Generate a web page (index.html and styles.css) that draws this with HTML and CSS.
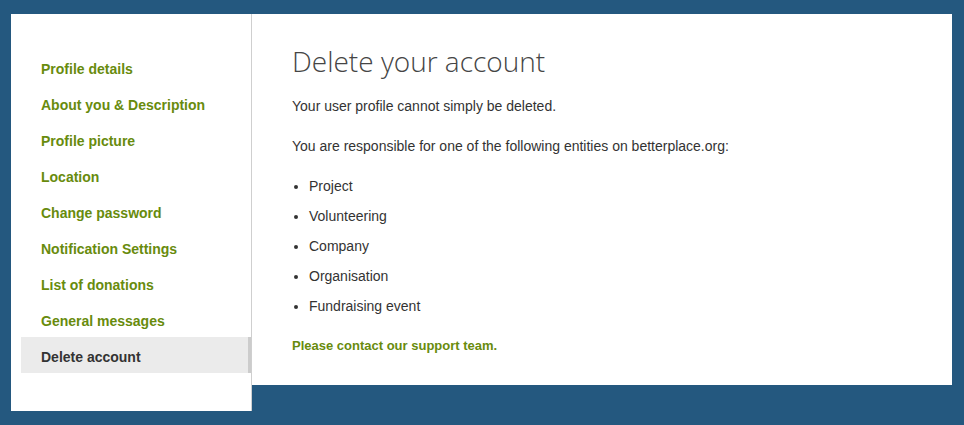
FILE: index.html
```html
<!DOCTYPE html>
<html lang="en">
<head>
    <meta charset="UTF-8">
    <meta name="viewport" content="width=device-width, initial-scale=1.0">
    <title>Delete your account</title>
    <link rel="stylesheet" href="styles.css">
</head>
<body>
    <div class="page">
        <nav class="sidebar">
            <a class="nav-item" href="#">Profile details</a>
            <a class="nav-item" href="#">About you &amp; Description</a>
            <a class="nav-item" href="#">Profile picture</a>
            <a class="nav-item" href="#">Location</a>
            <a class="nav-item" href="#">Change password</a>
            <a class="nav-item" href="#">Notification Settings</a>
            <a class="nav-item" href="#">List of donations</a>
            <a class="nav-item" href="#">General messages</a>
            <a class="nav-item active" href="#">Delete account</a>
        </nav>
        <main class="content">
            <h1>Delete your account</h1>
            <p>Your user profile cannot simply be deleted.</p>
            <p>You are responsible for one of the following entities on betterplace.org:</p>
            <ul>
                <li>Project</li>
                <li>Volunteering</li>
                <li>Company</li>
                <li>Organisation</li>
                <li>Fundraising event</li>
            </ul>
            <a class="support" href="#">Please contact our support team.</a>
        </main>
    </div>
</body>
</html>
```
FILE: styles.css
```css
body {
    margin: 0;
    padding: 0;
    background-color: #24587f;
    font-family: "Liberation Sans", Arial, sans-serif;
    font-size: 14px;
    color: #333;
}
.page {
    display: flex;
    align-items: flex-start;
    padding: 14px 12px 0 11px;
}
.sidebar {
    display: flex;
    flex-direction: column;
    width: 230px;
    padding: 35px 0 38px 10px;
    background: #fff;
    border-right: 1px solid #cfcfcf;
}
.nav-item {
    display: block;
    height: 36px;
    line-height: 41px;
    padding-left: 20px;
    font-weight: bold;
    color: #688b0d;
    text-decoration: none;
}
.nav-item.active {
    background: #ebebeb;
    color: #333;
    border-right: 3px solid #cccccc;
}
.content {
    flex: 1;
    height: 344px;
    padding: 27px 40px 0;
    background: #fff;
}
h1 {
    margin: 0 0 15px;
    font-family: "Open Sans", sans-serif;
    font-weight: 300;
    font-size: 28px;
    line-height: 40px;
    color: #454545;
}
p {
    margin: 0 0 20px;
    line-height: 20px;
}
ul {
    margin: 0 0 20px;
    padding-left: 17px;
}
li {
    line-height: 20px;
}
li + li {
    margin-top: 10px;
}
.support {
    display: block;
    line-height: 20px;
    font-size: 13px;
    font-weight: bold;
    color: #688b0d;
    text-decoration: none;
}
```
